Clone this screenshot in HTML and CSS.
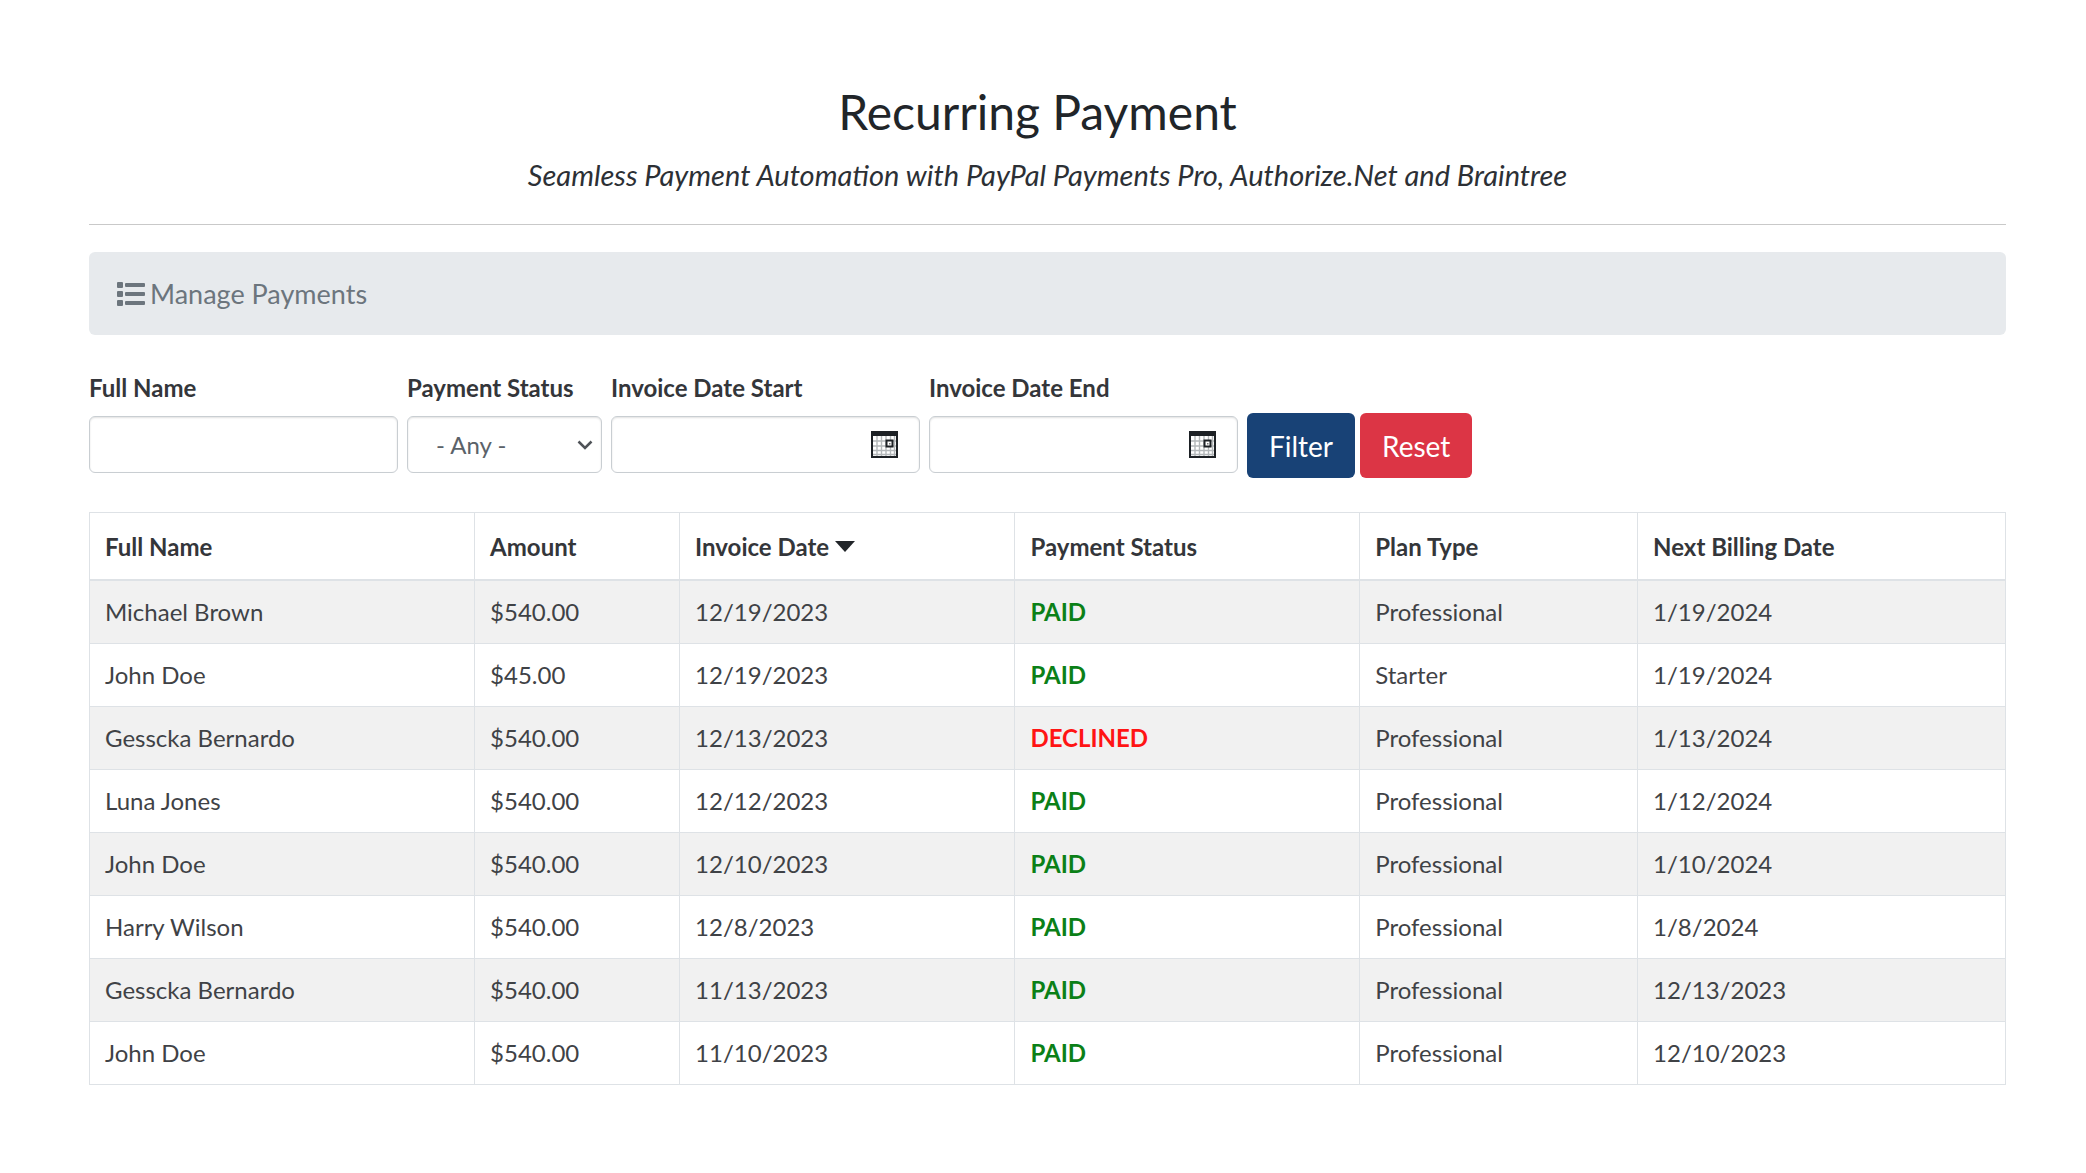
FILE: index.html
```html
<!DOCTYPE html>
<html lang="en">
<head>
<meta charset="utf-8">
<title>Recurring Payment</title>
<meta name="viewport" content="width=device-width, initial-scale=1">
<link rel="stylesheet" href="styles.css">
</head>
<body>
<svg class="sprite" aria-hidden="true">
  <symbol id="calendar" viewBox="0 0 27 27">
    <path fill="#1d2125" d="M0 0h27v27H0z"/>
    <path fill="#fff" d="M2 5h23v20H2z"/>
    <path fill="none" stroke="#b4b8ba" stroke-width="1.4" d="M6 5v20M10.500 5v20M15 5v20M19.500 5v20M23.500 5v20M2 10h23M2 15h23M2 19.500h23M2 23.500h23"/>
    <path fill="#fff" stroke="#1d2125" stroke-width="2" d="M15.500 9.500h6v6h-6z"/>
    <path fill="#777" d="M18 12h1.500v1.500H18z"/>
  </symbol>
</svg>
<main class="page">
  <header class="page-header">
    <h1 class="title">Recurring Payment</h1>
    <p class="subtitle">Seamless Payment Automation with PayPal Payments Pro, Authorize.Net and Braintree</p>
  </header>

  <h2 class="panel">
    <svg class="panel-icon" viewBox="0 0 28 24" aria-hidden="true">
      <rect x="0" y="0" width="6" height="6" rx="1"/>
      <rect x="0" y="9" width="6" height="6" rx="1"/>
      <rect x="0" y="18" width="6" height="6" rx="1"/>
      <rect x="8" y="1" width="20" height="4" rx="1"/>
      <rect x="8" y="10" width="20" height="4" rx="1"/>
      <rect x="8" y="19" width="20" height="4" rx="1"/>
    </svg>
    Manage Payments
  </h2>

  <form class="filters">
    <div class="field field-wide">
      <label for="full-name">Full Name</label>
      <input class="control" id="full-name" type="text">
    </div>
    <div class="field field-narrow">
      <label for="status">Payment Status</label>
      <div class="control select">
        <select id="status"><option>- Any -</option><option>Paid</option><option>Declined</option></select>
        <svg class="chevron" viewBox="0 0 16 10" aria-hidden="true"><path d="M1.500 1.500 8 8l6.500-6.500"/></svg>
      </div>
    </div>
    <div class="field field-wide">
      <label for="date-start">Invoice Date Start</label>
      <div class="control date">
        <input id="date-start" type="text">
        <button class="picker" type="button" aria-label="Pick start date"><svg><use href="#calendar"/></svg></button>
      </div>
    </div>
    <div class="field field-wide">
      <label for="date-end">Invoice Date End</label>
      <div class="control date">
        <input id="date-end" type="text">
        <button class="picker" type="button" aria-label="Pick end date"><svg><use href="#calendar"/></svg></button>
      </div>
    </div>
    <div class="actions">
      <button class="button primary" type="submit">Filter</button>
      <button class="button danger" type="reset">Reset</button>
    </div>
  </form>

  <table class="payments">
    <colgroup><col class="col-name"><col class="col-amount"><col class="col-date"><col class="col-status"><col class="col-plan"><col></colgroup>
    <thead>
      <tr><th>Full Name</th><th>Amount</th><th>Invoice Date <svg class="sort" viewBox="0 0 20 11" aria-hidden="true"><path d="M0 0h20L10 11z"/></svg></th><th>Payment Status</th><th>Plan Type</th><th>Next Billing Date</th></tr>
    </thead>
    <tbody>
      <tr><td>Michael Brown</td><td>$540.00</td><td>12/19/2023</td><td class="paid">PAID</td><td>Professional</td><td>1/19/2024</td></tr>
      <tr><td>John Doe</td><td>$45.00</td><td>12/19/2023</td><td class="paid">PAID</td><td>Starter</td><td>1/19/2024</td></tr>
      <tr><td>Gesscka Bernardo</td><td>$540.00</td><td>12/13/2023</td><td class="declined">DECLINED</td><td>Professional</td><td>1/13/2024</td></tr>
      <tr><td>Luna Jones</td><td>$540.00</td><td>12/12/2023</td><td class="paid">PAID</td><td>Professional</td><td>1/12/2024</td></tr>
      <tr><td>John Doe</td><td>$540.00</td><td>12/10/2023</td><td class="paid">PAID</td><td>Professional</td><td>1/10/2024</td></tr>
      <tr><td>Harry Wilson</td><td>$540.00</td><td>12/8/2023</td><td class="paid">PAID</td><td>Professional</td><td>1/8/2024</td></tr>
      <tr><td>Gesscka Bernardo</td><td>$540.00</td><td>11/13/2023</td><td class="paid">PAID</td><td>Professional</td><td>12/13/2023</td></tr>
      <tr><td>John Doe</td><td>$540.00</td><td>11/10/2023</td><td class="paid">PAID</td><td>Professional</td><td>12/10/2023</td></tr>
    </tbody>
  </table>
</main>
</body>
</html>
```
FILE: styles.css
```css
* {
  box-sizing: border-box;
}

body {
  margin: 0;
  background: #fff;
  color: #3f4246;
  font: 24px/30px Lato, "Open Sans", sans-serif;
}

.sprite {
  display: none;
}

.page {
  padding: 83px 80px 80px 89px;
}

.page-header {
  padding-bottom: 34px;
  border-bottom: 1px solid #c9c9c9;
  text-align: center;
}

.title {
  margin: 0 0 19px;
  padding-right: 20px;
  color: #212529;
  font-size: 48px;
  font-weight: 400;
  line-height: 58px;
}

.subtitle {
  margin: 0;
  color: #2c3035;
  font-size: 29px;
  font-style: italic;
  line-height: 30px;
}

.panel {
  display: flex;
  align-items: center;
  gap: 5px;
  margin: 27px 0 38px;
  padding: 26px 28px;
  border-radius: 6px;
  background: #e7eaed;
  color: #6c757d;
  font-size: 27px;
  font-weight: 400;
  line-height: 31px;
}

.panel-icon {
  width: 28px;
  height: 24px;
  fill: currentColor;
}

.filters {
  display: flex;
  flex-wrap: wrap;
  align-items: flex-end;
  gap: 9px;
  margin-bottom: 34px;
}

.field {
  display: flex;
  flex-direction: column;
  gap: 13px;
  margin-bottom: 5px;
}

.field-wide {
  width: 309px;
}

.field-narrow {
  width: 195px;
}

label,
th {
  color: #34363a;
  font-weight: 700;
}

.control {
  width: 100%;
  height: 57px;
  padding: 0 21px;
  border: 1px solid #c9ced2;
  border-radius: 6px;
  background: #fff;
  box-shadow: inset 0 1px 2px rgba(0, 0, 0, .12);
  color: #5b6269;
  font: inherit;
}

.select {
  display: grid;
  align-items: center;
  padding: 0;
}

.select select {
  grid-area: 1 / 1;
  width: 100%;
  height: 100%;
  padding: 0 28px;
  border: 0;
  background: none;
  appearance: none;
  color: inherit;
  font: inherit;
}

.chevron {
  grid-area: 1 / 1;
  justify-self: end;
  width: 16px;
  height: 10px;
  margin-right: 8px;
  fill: none;
  stroke: #4f5358;
  stroke-width: 2.5;
  pointer-events: none;
}

.date {
  display: flex;
  align-items: center;
}

.date input {
  flex: 1;
  min-width: 0;
  border: 0;
  outline: 0;
  background: none;
  font: inherit;
}

.picker {
  display: flex;
  padding: 0;
  border: 0;
  background: none;
}

.picker svg {
  width: 27px;
  height: 27px;
}

.actions {
  display: flex;
  gap: 5px;
}

.button {
  height: 65px;
  padding: 0 22px;
  border: 0;
  border-radius: 6px;
  color: #fff;
  font: 28px/32px Lato, "Open Sans", sans-serif;
}

.primary {
  background: #184276;
}

.danger {
  background: #dc3545;
}

.payments {
  width: 100%;
  border-collapse: collapse;
  table-layout: fixed;
}

.col-name {
  width: 20.1%;
}

.col-amount {
  width: 10.7%;
}

.col-date {
  width: 17.5%;
}

.col-status {
  width: 18%;
}

.col-plan {
  width: 14.5%;
}

th,
td {
  padding: 16px 15px;
  border: 1px solid #dee2e6;
  text-align: left;
}

th {
  padding: 19px 15px 17px;
  border-bottom-width: 2px;
}

tbody tr:nth-child(odd) {
  background: #f1f1f1;
}

.sort {
  width: 20px;
  height: 11px;
  margin-bottom: 4px;
  fill: #212529;
}

.paid,
.declined {
  font-weight: 700;
}

.paid {
  color: #0b8017;
}

.declined {
  color: #ff1414;
}
```
